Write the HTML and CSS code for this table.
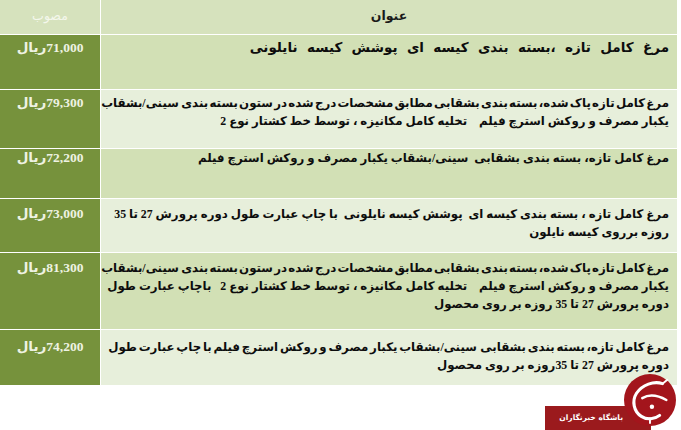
FILE: index.html
```html
<!DOCTYPE html>
<html lang="fa">
<head>
<meta charset="utf-8">
<title>قیمت مرغ</title>
<link rel="stylesheet" href="styles.css">
</head>
<body>
<div class="page">
  <div class="table" dir="rtl">
    <div class="cell head title">عنوان</div>
    <div class="cell head price-head">مصوب</div>

    <div class="cell desc dark r1 wide"><div class="ln">مرغ کامل تازه ،بسته بندی کیسه ای پوشش کیسه نایلونی</div></div>
    <div class="cell price r1">71,000ریال</div>

    <div class="cell desc light r2"><div class="ln tighter">مرغ کامل تازه پاک شده، بسته بندی بشقابی مطابق مشخصات درج شده در ستون بسته بندی  سینی/بشقاب</div><div class="ln">یکبار مصرف و روکش استرچ فیلم    تخلیه کامل مکانیزه ، توسط خط کشتار نوع 2</div></div>
    <div class="cell price r2">79,300ریال</div>

    <div class="cell desc dark r3"><div class="ln">مرغ کامل تازه، بسته بندی بشقابی  سینی/بشقاب یکبار مصرف و روکش استرچ فیلم</div></div>
    <div class="cell price r3">72,200ریال</div>

    <div class="cell desc light r4"><div class="ln">مرغ کامل تازه ، بسته بندی کیسه ای  پوشش کیسه نایلونی  با چاپ عبارت طول دوره پرورش 27 تا 35</div><div class="ln">روزه برروی کیسه نایلون</div></div>
    <div class="cell price r4">73,000ریال</div>

    <div class="cell desc dark r5"><div class="ln tighter">مرغ کامل تازه پاک شده، بسته بندی بشقابی مطابق مشخصات درج شده در ستون بسته بندی  سینی/بشقاب</div><div class="ln">یکبار مصرف و روکش استرچ فیلم    تخلیه کامل مکانیزه ، توسط خط کشتار نوع 2   باچاپ عبارت طول</div><div class="ln">دوره پرورش 27 تا 35 روزه بر روی محصول</div></div>
    <div class="cell price r5">81,300ریال</div>

    <div class="cell desc light r6"><div class="ln tight">مرغ کامل تازه، بسته بندی بشقابی  سینی/بشقاب یکبار مصرف و روکش استرچ فیلم با چاپ عبارت طول</div><div class="ln">دوره پرورش 27 تا 35روزه بر روی محصول</div></div>
    <div class="cell price r6">74,200ریال</div>
  </div>

  <div class="logo">
    <div class="banner" dir="rtl">باشگاه خبرنگاران</div>
    <svg class="badge" viewBox="0 0 54 54" width="52" height="52">
      <circle cx="27" cy="27" r="27" fill="#a3151c"/>
      <path d="M40 10 C31 7 19 11 13 20 C8 28 10 39 18 44 C24 48 32 47 37 43" fill="none" stroke="#fff" stroke-width="3.2" stroke-linecap="round"/>
      <path d="M40 10 L45 6" fill="none" stroke="#fff" stroke-width="2" stroke-linecap="round"/>
      <path d="M19 25 C26 21 35 22 44 27" fill="none" stroke="#fff" stroke-width="2.6" stroke-linecap="round"/>
      <path d="M27 46 L27 51" fill="none" stroke="#fff" stroke-width="2" stroke-linecap="round"/>
      <circle cx="29" cy="34" r="2.3" fill="#fff"/>
    </svg>
  </div>
</div>
</body>
</html>
```

FILE: styles.css
```css
html, body {
  margin: 0;
  padding: 0;
  background: #ffffff;
}

.page {
  position: relative;
  width: 681px;
  height: 430px;
  overflow: hidden;
}

.table {
  display: grid;
  direction: rtl;
  grid-template-columns: 576px 100px;
  grid-template-rows: 34px 54px 58px 49px 53px 76px 55px;
  column-gap: 1px;
  row-gap: 1px;
  background: #ffffff;
  width: 677px;
}

.cell {
  font-family: "Liberation Serif", "DejaVu Sans", serif;
  font-weight: bold;
  font-size: 11.8px;
  line-height: 18px;
  box-sizing: border-box;
}

.head {
  background: #d6e2bd;
  text-align: center;
  padding-top: 7px;
  font-size: 12.5px;
}

.title {
  color: #1a1a1a;
}

.price-head {
  color: #f4f7ec;
  font-weight: normal;
}

.desc {
  color: #0d0d0d;
  padding-right: 8px;
  white-space: pre;
  text-align: right;
}

.wide {
  font-size: 13.5px;
  word-spacing: 6px;
}

.tight {
  word-spacing: -1.2px;
}

.tighter {
  word-spacing: -1.7px;
}

.dark {
  background: #d2e0b5;
}

.light {
  background: #e7efdb;
}

.price {
  background: #76923c;
  color: #eef2e2;
  text-align: center;
  font-size: 13.5px;
}

.r1 { padding-top: 4px; }
.r2 { padding-top: 4px; }
.r3 { padding-top: 0; }
.r4 { padding-top: 6px; }
.r5 { padding-top: 6px; }
.r6 { padding-top: 8px; }

.logo {
  position: absolute;
  right: 5px;
  bottom: 0;
  width: 131px;
  height: 56px;
}

.banner {
  position: absolute;
  left: 0;
  bottom: 0;
  width: 106px;
  height: 24px;
  background: #9b1a1d;
  color: #ffffff;
  font-family: "DejaVu Sans", sans-serif;
  font-weight: bold;
  font-size: 7.5px;
  line-height: 24px;
  text-align: right;
  padding-right: 28px;
  box-sizing: border-box;
  white-space: nowrap;
}

.badge {
  position: absolute;
  right: 0;
  top: 0;
  display: block;
}
```
